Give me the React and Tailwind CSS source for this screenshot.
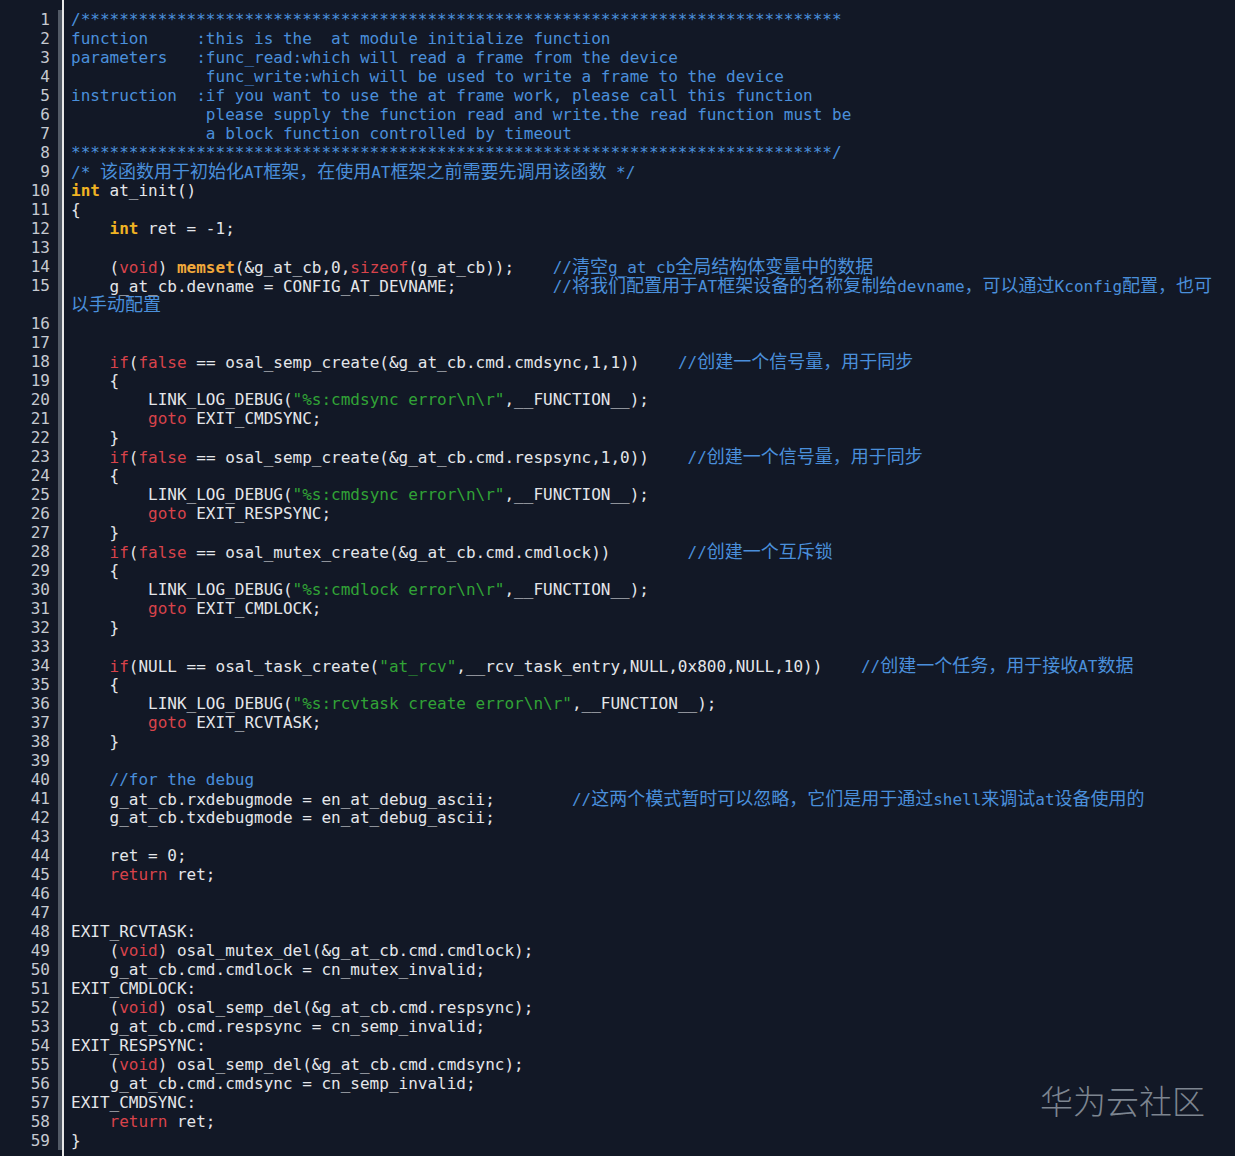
import React from "react";

const SRC = [
  "/" + "*".repeat(79),
  "function     :this is the  at module initialize function",
  "parameters   :func_read:which will read a frame from the device",
  "              func_write:which will be used to write a frame to the device",
  "instruction  :if you want to use the at frame work, please call this function",
  "              please supply the function read and write.the read function must be",
  "              a block function controlled by timeout",
  "*".repeat(79) + "/",
  "/* 该函数用于初始化AT框架，在使用AT框架之前需要先调用该函数 */",
  "int at_init()",
  "{",
  "    int ret = -1;",
  "",
  "    (void) memset(&g_at_cb,0,sizeof(g_at_cb));    //清空g_at_cb全局结构体变量中的数据",
  "    g_at_cb.devname = CONFIG_AT_DEVNAME;          //将我们配置用于AT框架设备的名称复制给devname，可以通过Kconfig配置，也可",
  "",
  "",
  "    if(false == osal_semp_create(&g_at_cb.cmd.cmdsync,1,1))    //创建一个信号量，用于同步",
  "    {",
  '        LINK_LOG_DEBUG("%s:cmdsync error\\n\\r",__FUNCTION__);',
  "        goto EXIT_CMDSYNC;",
  "    }",
  "    if(false == osal_semp_create(&g_at_cb.cmd.respsync,1,0))    //创建一个信号量，用于同步",
  "    {",
  '        LINK_LOG_DEBUG("%s:cmdsync error\\n\\r",__FUNCTION__);',
  "        goto EXIT_RESPSYNC;",
  "    }",
  "    if(false == osal_mutex_create(&g_at_cb.cmd.cmdlock))        //创建一个互斥锁",
  "    {",
  '        LINK_LOG_DEBUG("%s:cmdlock error\\n\\r",__FUNCTION__);',
  "        goto EXIT_CMDLOCK;",
  "    }",
  "",
  '    if(NULL == osal_task_create("at_rcv",__rcv_task_entry,NULL,0x800,NULL,10))    //创建一个任务，用于接收AT数据',
  "    {",
  '        LINK_LOG_DEBUG("%s:rcvtask create error\\n\\r",__FUNCTION__);',
  "        goto EXIT_RCVTASK;",
  "    }",
  "",
  "    //for the debug",
  "    g_at_cb.rxdebugmode = en_at_debug_ascii;        //这两个模式暂时可以忽略，它们是用于通过shell来调试at设备使用的",
  "    g_at_cb.txdebugmode = en_at_debug_ascii;",
  "",
  "    ret = 0;",
  "    return ret;",
  "",
  "",
  "EXIT_RCVTASK:",
  "    (void) osal_mutex_del(&g_at_cb.cmd.cmdlock);",
  "    g_at_cb.cmd.cmdlock = cn_mutex_invalid;",
  "EXIT_CMDLOCK:",
  "    (void) osal_semp_del(&g_at_cb.cmd.respsync);",
  "    g_at_cb.cmd.respsync = cn_semp_invalid;",
  "EXIT_RESPSYNC:",
  "    (void) osal_semp_del(&g_at_cb.cmd.cmdsync);",
  "    g_at_cb.cmd.cmdsync = cn_semp_invalid;",
  "EXIT_CMDSYNC:",
  "    return ret;",
  "}",
];

// line 15's comment wraps onto a second visual row
const WRAP_AFTER = 15;
const WRAP_TEXT = "以手动配置";

const STYLE = {
  plain: "",
  comment: "text-[#4a8fdb]",
  red: "text-[#d8434b]",
  type: "text-[#f0b323] font-bold",
  fn: "text-[#f2a93b] font-bold",
  str: "text-[#31a336]",
};

const RED = new Set(["void", "sizeof", "false", "if", "goto", "return"]);

const tokenize = (line, n) => {
  if (n <= 9) return [[line, "comment"]];
  const out = [];
  const re = /\/\/.*|\/\*.*|"(?:[^"\\]|\\.)*"|[A-Za-z_]\w*|[^A-Za-z_"\/]+|./g;
  let m;
  while ((m = re.exec(line))) {
    const t = m[0];
    let kind = "plain";
    if (t.startsWith("//") || t.startsWith("/*")) kind = "comment";
    else if (t.startsWith('"')) kind = "str";
    else if (t === "int") kind = "type";
    else if (t === "memset") kind = "fn";
    else if (RED.has(t)) kind = "red";
    const last = out[out.length - 1];
    if (last && last[1] === kind) last[0] += t;
    else out.push([t, kind]);
  }
  return out;
};

// CJK glyphs in the shot are a little wider than two code columns
const withCjk = (text) =>
  text.split(/([\u3000-\u9fff\uff00-\uffef]+)/).map((part, i) =>
    /[\u3000-\u9fff\uff00-\uffef]/.test(part) ? (
      <span key={i} className="text-[18px]">{part}</span>
    ) : (
      part
    )
  );

const CodeLine = ({ text, n }) => (
  <div className="h-[19px]">
    {tokenize(text, n).map(([t, kind], i) => (
      <span key={i} className={STYLE[kind]}>
        {withCjk(t)}
      </span>
    ))}
  </div>
);

const App = () => {
  const numbers = [];
  SRC.forEach((_, i) => {
    numbers.push(i + 1);
    if (i + 1 === WRAP_AFTER) numbers.push("");
  });

  return (
    <div
      className="relative flex h-[1156px] w-[1235px] overflow-hidden bg-[#121826] text-[16px] leading-[19px] text-[#e4e6ea]"
      style={{ fontFamily: '"DejaVu Sans Mono", "Noto Sans CJK SC", monospace' }}
    >
      {/* Gutter */}
      <div className="w-[62px] shrink-0 pt-[10px]">
        <div className="border-r-[4px] border-[#525a66] pr-[8px] text-right text-[#c5c9d0]">
          {numbers.map((num, i) => (
            <div key={i} className="h-[19px]">
              {num}
            </div>
          ))}
        </div>
      </div>

      {/* Code */}
      <div className="flex-1 border-l-2 border-[#e8e8e8] pt-[10px] pl-[7px] whitespace-pre">
        {SRC.map((line, i) => (
          <React.Fragment key={i}>
            <CodeLine text={line} n={i + 1} />
            {i + 1 === WRAP_AFTER && (
              <div className="h-[19px] text-[#4a8fdb]">{withCjk(WRAP_TEXT)}</div>
            )}
          </React.Fragment>
        ))}
      </div>

      {/* Watermark */}
      <div
        className="absolute right-[30px] top-[1078px] text-[33px] font-light leading-[44px] text-[#7d8590]"
        style={{ fontFamily: '"Noto Sans CJK SC", sans-serif' }}
      >
        华为云社区
      </div>
    </div>
  );
};

export default App;
